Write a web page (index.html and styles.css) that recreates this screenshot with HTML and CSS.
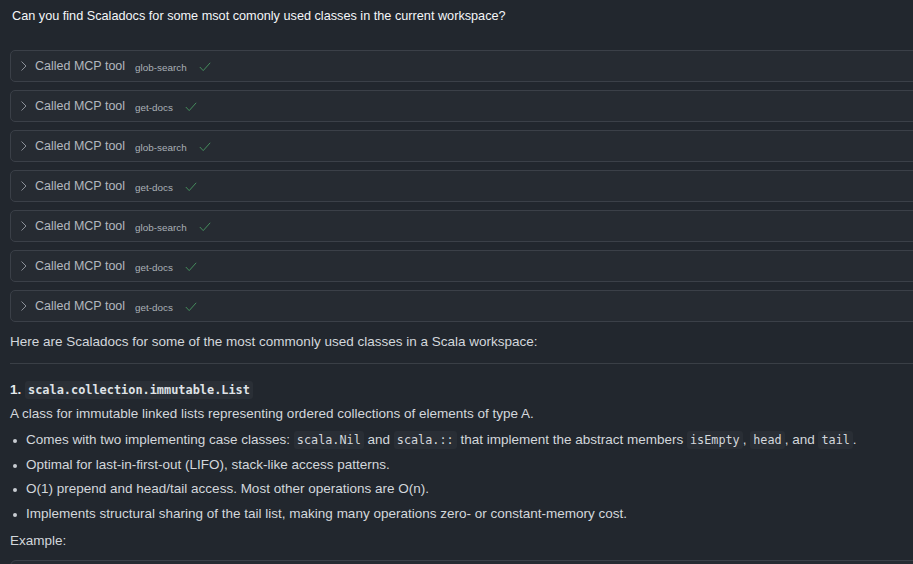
FILE: index.html
```html
<!DOCTYPE html>
<html>
<head>
<meta charset="utf-8">
<link rel="stylesheet" href="styles.css">
</head>
<body>
<div class="page">
  <div class="question">Can you find Scaladocs for some msot comonly used classes in the current workspace?</div>
  <div class="tools">
    <div class="tool"><span class="chev"><svg width="8" height="12" viewBox="0 0 8 12"><path d="M1.5 1.5 L6 6 L1.5 10.5" fill="none" stroke="#8b9098" stroke-width="1"/></svg></span><span class="label">Called MCP tool</span><span class="name">glob-search</span><span class="check"><svg width="12" height="10" viewBox="0 0 12 10"><path d="M0.8 5 L4.2 8.6 L11.2 0.8" fill="none" stroke="#4a9862" stroke-width="0.9"/></svg></span></div>
    <div class="tool"><span class="chev"><svg width="8" height="12" viewBox="0 0 8 12"><path d="M1.5 1.5 L6 6 L1.5 10.5" fill="none" stroke="#8b9098" stroke-width="1"/></svg></span><span class="label">Called MCP tool</span><span class="name">get-docs</span><span class="check"><svg width="12" height="10" viewBox="0 0 12 10"><path d="M0.8 5 L4.2 8.6 L11.2 0.8" fill="none" stroke="#4a9862" stroke-width="0.9"/></svg></span></div>
    <div class="tool"><span class="chev"><svg width="8" height="12" viewBox="0 0 8 12"><path d="M1.5 1.5 L6 6 L1.5 10.5" fill="none" stroke="#8b9098" stroke-width="1"/></svg></span><span class="label">Called MCP tool</span><span class="name">glob-search</span><span class="check"><svg width="12" height="10" viewBox="0 0 12 10"><path d="M0.8 5 L4.2 8.6 L11.2 0.8" fill="none" stroke="#4a9862" stroke-width="0.9"/></svg></span></div>
    <div class="tool"><span class="chev"><svg width="8" height="12" viewBox="0 0 8 12"><path d="M1.5 1.5 L6 6 L1.5 10.5" fill="none" stroke="#8b9098" stroke-width="1"/></svg></span><span class="label">Called MCP tool</span><span class="name">get-docs</span><span class="check"><svg width="12" height="10" viewBox="0 0 12 10"><path d="M0.8 5 L4.2 8.6 L11.2 0.8" fill="none" stroke="#4a9862" stroke-width="0.9"/></svg></span></div>
    <div class="tool"><span class="chev"><svg width="8" height="12" viewBox="0 0 8 12"><path d="M1.5 1.5 L6 6 L1.5 10.5" fill="none" stroke="#8b9098" stroke-width="1"/></svg></span><span class="label">Called MCP tool</span><span class="name">glob-search</span><span class="check"><svg width="12" height="10" viewBox="0 0 12 10"><path d="M0.8 5 L4.2 8.6 L11.2 0.8" fill="none" stroke="#4a9862" stroke-width="0.9"/></svg></span></div>
    <div class="tool"><span class="chev"><svg width="8" height="12" viewBox="0 0 8 12"><path d="M1.5 1.5 L6 6 L1.5 10.5" fill="none" stroke="#8b9098" stroke-width="1"/></svg></span><span class="label">Called MCP tool</span><span class="name">get-docs</span><span class="check"><svg width="12" height="10" viewBox="0 0 12 10"><path d="M0.8 5 L4.2 8.6 L11.2 0.8" fill="none" stroke="#4a9862" stroke-width="0.9"/></svg></span></div>
    <div class="tool"><span class="chev"><svg width="8" height="12" viewBox="0 0 8 12"><path d="M1.5 1.5 L6 6 L1.5 10.5" fill="none" stroke="#8b9098" stroke-width="1"/></svg></span><span class="label">Called MCP tool</span><span class="name">get-docs</span><span class="check"><svg width="12" height="10" viewBox="0 0 12 10"><path d="M0.8 5 L4.2 8.6 L11.2 0.8" fill="none" stroke="#4a9862" stroke-width="0.9"/></svg></span></div>
  </div>
  <p class="intro">Here are Scaladocs for some of the most commonly used classes in a Scala workspace:</p>
  <hr class="divider">
  <h3 class="heading">1. <code class="hcode">scala.collection.immutable.List</code></h3>
  <p class="para">A class for immutable linked lists representing ordered collections of elements of type A.</p>
  <ul class="bullets">
    <li>Comes with two implementing case classes: <code>scala.Nil</code> and <code>scala.::</code> that implement the abstract members <code>isEmpty</code>, <code>head</code>, and <code>tail</code>.</li>
    <li>Optimal for last-in-first-out (LIFO), stack-like access patterns.</li>
    <li>O(1) prepend and head/tail access. Most other operations are O(n).</li>
    <li>Implements structural sharing of the tail list, making many operations zero- or constant-memory cost.</li>
  </ul>
  <p class="para example">Example:</p>
  <div class="codeblock"></div>
</div>
</body>
</html>
```
FILE: styles.css
```css
html, body {
  margin: 0;
  padding: 0;
  background: #22272e;
  overflow: hidden;
}
body {
  font-family: "Liberation Sans", Arial, sans-serif;
  color: #d3d7dc;
  width: 913px;
  height: 564px;
}
.page {
  padding: 8px 0 0 10px;
}
.question {
  color: #f4f6f8;
  font-size: 12.7px;
  padding-left: 2px;
  line-height: 16px;
}
.tools {
  margin-top: 26px;
  display: flex;
  flex-direction: column;
  gap: 8px;
  margin-right: -20px;
}
.tool {
  height: 30px;
  border: 1px solid #3b4048;
  border-radius: 5px;
  background: #262b32;
  display: flex;
  align-items: center;
}
.chev {
  display: flex;
  margin-left: 9px;
  width: 8px;
}
.label {
  margin-left: 7px;
  font-size: 12.5px;
  color: #b3b8bf;
}
.name {
  margin-left: 10px;
  font-size: 9.9px;
  color: #aab0b7;
  padding-top: 2px;
}
.check {
  display: flex;
  margin-left: 12px;
  padding-top: 2px;
}
.intro {
  margin: 12px 0 0 0;
  font-size: 13.5px;
  line-height: 16px;
  color: #d3d7dc;
}
.divider {
  border: 0;
  border-top: 1px solid #3a3f46;
  margin: 13px 0 0 0;
}
.heading {
  margin: 16px 0 0 0;
  font-size: 13.5px;
  font-weight: 700;
  color: #e6e9ec;
  line-height: 20px;
}
.hcode {
  font-family: "DejaVu Sans Mono", monospace;
  font-size: 11.9px;
  font-weight: 700;
  background: #2a2f36;
  border-radius: 3px;
  padding: 2px 3px;
  color: #dfe2e6;
}
.para {
  margin: 6px 0 0 0;
  font-size: 13.5px;
  line-height: 16px;
}
.bullets {
  margin: 10px 0 0 0;
  padding: 0 0 0 16px;
  list-style: none;
  display: flex;
  flex-direction: column;
  gap: 8.6px;
}
.bullets li {
  font-size: 13.5px;
  line-height: 16px;
  height: 16px;
  position: relative;
}
.bullets li::before {
  content: "";
  position: absolute;
  left: -13px;
  top: 7px;
  width: 4px;
  height: 4px;
  border-radius: 50%;
  background: #c8ccd1;
}
.bullets code {
  font-family: "DejaVu Sans Mono", monospace;
  font-size: 11.8px;
  background: #292e35;
  border-radius: 3px;
  padding: 2px 3px;
  color: #d3d7dc;
}
.example {
  margin-top: 11px;
}
.codeblock {
  margin-top: 11px;
  height: 40px;
  border: 1px solid #3b4048;
  border-radius: 6px;
  background: #262b32;
  margin-right: -20px;
}
```
